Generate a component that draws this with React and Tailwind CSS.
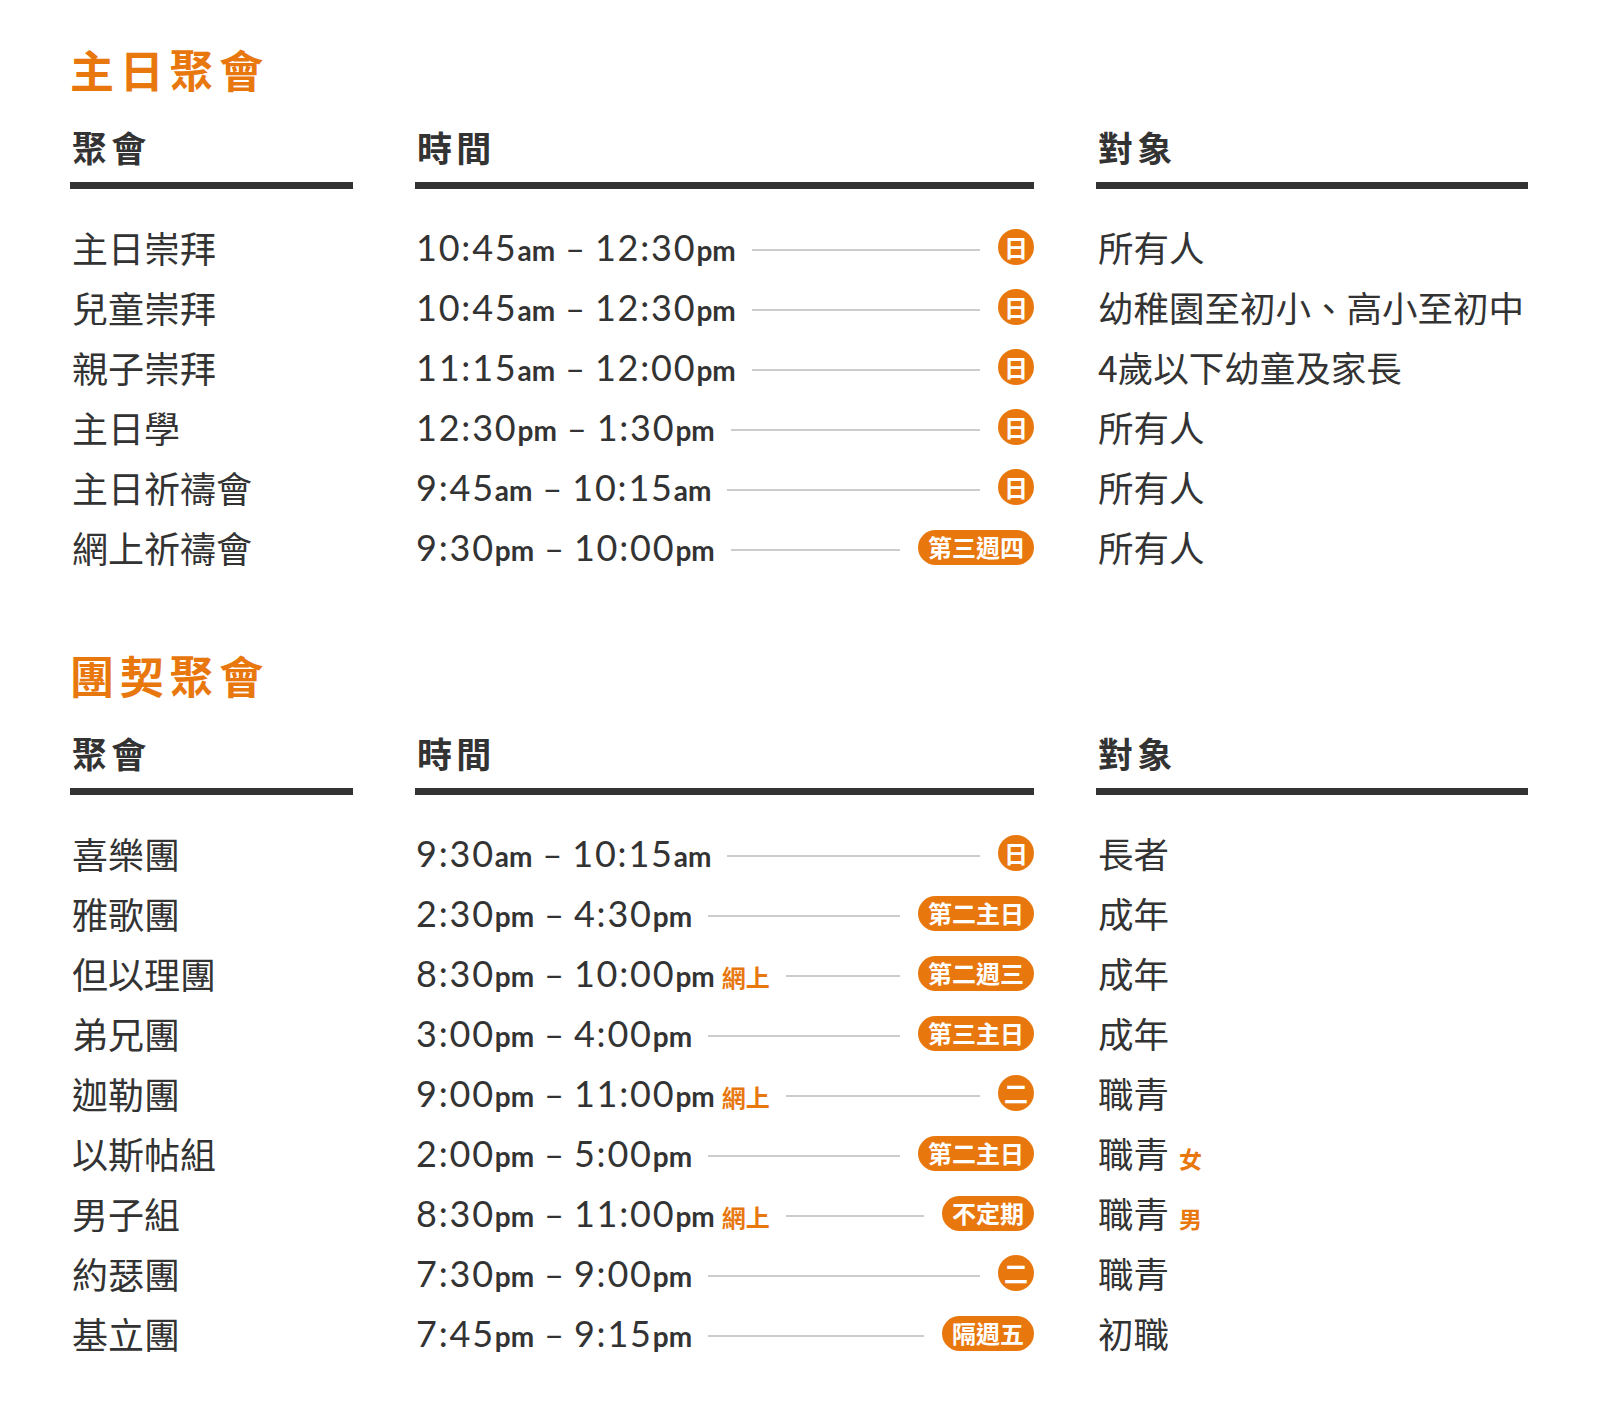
const SUNDAY = [
  { name: "主日崇拜", from: ["10:45", "am"], to: ["12:30", "pm"], badge: "日", who: "所有人" },
  { name: "兒童崇拜", from: ["10:45", "am"], to: ["12:30", "pm"], badge: "日", who: "幼稚園至初小、高小至初中" },
  { name: "親子崇拜", from: ["11:15", "am"], to: ["12:00", "pm"], badge: "日", who: "4歲以下幼童及家長" },
  { name: "主日學", from: ["12:30", "pm"], to: ["1:30", "pm"], badge: "日", who: "所有人" },
  { name: "主日祈禱會", from: ["9:45", "am"], to: ["10:15", "am"], badge: "日", who: "所有人" },
  { name: "網上祈禱會", from: ["9:30", "pm"], to: ["10:00", "pm"], badge: "第三週四", who: "所有人" },
];

const FELLOWSHIP = [
  { name: "喜樂團", from: ["9:30", "am"], to: ["10:15", "am"], badge: "日", who: "長者" },
  { name: "雅歌團", from: ["2:30", "pm"], to: ["4:30", "pm"], badge: "第二主日", who: "成年" },
  { name: "但以理團", from: ["8:30", "pm"], to: ["10:00", "pm"], online: true, badge: "第二週三", who: "成年" },
  { name: "弟兄團", from: ["3:00", "pm"], to: ["4:00", "pm"], badge: "第三主日", who: "成年" },
  { name: "迦勒團", from: ["9:00", "pm"], to: ["11:00", "pm"], online: true, badge: "二", who: "職青" },
  { name: "以斯帖組", from: ["2:00", "pm"], to: ["5:00", "pm"], badge: "第二主日", who: "職青", tag: "女" },
  { name: "男子組", from: ["8:30", "pm"], to: ["11:00", "pm"], online: true, badge: "不定期", who: "職青", tag: "男" },
  { name: "約瑟團", from: ["7:30", "pm"], to: ["9:00", "pm"], badge: "二", who: "職青" },
  { name: "基立團", from: ["7:45", "pm"], to: ["9:15", "pm"], badge: "隔週五", who: "初職" },
];

const CJK = "font-['Noto_Sans_CJK_TC','Noto_Sans_CJK_SC',sans-serif]";
const COLS = "grid grid-cols-[283px_619px_432px] gap-x-[62px]";

function Clock({ t }) {
  return (
    <>
      <span className="font-normal text-[36px] tracking-[0.05em]">{t[0]}</span>
      <span className="font-bold text-[28px]">{t[1]}</span>
    </>
  );
}

function Badge({ text }) {
  if (text.length === 1) {
    return (
      <span className={`${CJK} grid h-[36px] w-[36px] shrink-0 place-items-center rounded-full bg-[#e8770e] text-[24px] font-bold leading-none text-white`}>
        {text}
      </span>
    );
  }
  return (
    <span className={`${CJK} flex h-[35px] shrink-0 items-center rounded-full bg-[#e8770e] px-[10px] text-[24px] font-bold leading-none text-white`}>
      {text}
    </span>
  );
}

function Section({ title, rows, className = "" }) {
  return (
    <section className={className}>
      <h2 className={`${CJK} h-[48px] text-[44px] font-bold leading-[48px] tracking-[0.13em] text-[#e8770e]`}>{title}</h2>

      {/* column headers with thick rule */}
      <div className={`${COLS} mt-[32px]`}>
        {["聚會", "時間", "對象"].map((h) => (
          <div key={h}>
            <div className={`${CJK} h-[44px] pl-[2px] text-[35px] font-bold leading-[44px] tracking-[0.12em] text-[#333]`}>{h}</div>
            <div className="mt-[13px] h-[7px] bg-[#333]" />
          </div>
        ))}
      </div>

      <div className="mt-[28px]">
        {rows.map((r) => (
          <div key={r.name} className={`${COLS} h-[60px] items-center text-[#333]`}>
            <div className={`${CJK} pl-[2px] text-[36px] leading-none`}>{r.name}</div>
            <div className="flex items-center">
              <span className="flex items-baseline whitespace-nowrap pl-[1px] font-['Lato',sans-serif] leading-none">
                <Clock t={r.from} />
                <span className="mx-[10px] font-normal text-[34px]">–</span>
                <Clock t={r.to} />
                {r.online && <span className={`${CJK} ml-[7px] text-[24px] font-bold text-[#e8770e]`}>網上</span>}
              </span>
              <span className="ml-[16px] mr-[18px] mt-[6px] h-[2px] flex-1 bg-[#cccccc]" />
              <Badge text={r.badge} />
            </div>
            <div className={`${CJK} flex items-baseline pl-[2px] text-[35.5px] leading-none`}>
              {r.who}
              {r.tag && <span className="ml-[10px] text-[23px] font-bold text-[#e8770e]">{r.tag}</span>}
            </div>
          </div>
        ))}
      </div>
    </section>
  );
}

export default function App() {
  return (
    <div className="min-h-[1417px] bg-white pl-[70px] pt-[45px] pb-[54px]">
      <Section title="主日聚會" rows={SUNDAY} />
      <Section title="團契聚會" rows={FELLOWSHIP} className="mt-[74px]" />
    </div>
  );
}
